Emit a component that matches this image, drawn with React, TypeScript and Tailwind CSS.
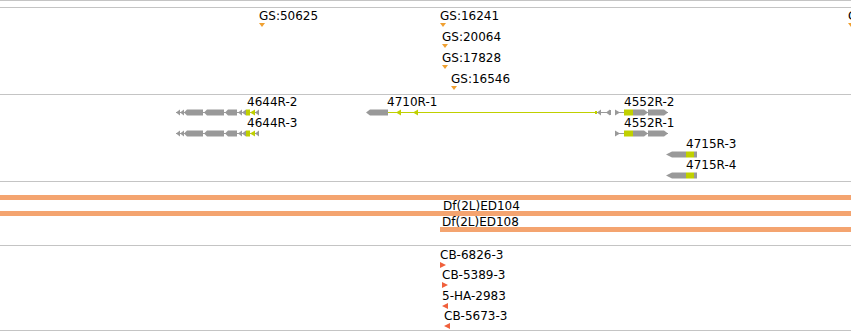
import React from "react";

const GRAY = "#999999";
const GREEN = "#c0d000";
const ORANGE = "#f0a030";
const RED = "#f0603c";

// shape helpers (page x coords, track-local y)
const leftExon = (x0: number, x1: number, cy: number, tip = 3, h = 3) =>
  `${x0},${cy} ${x0 + tip},${cy - h} ${x1},${cy - h} ${x1},${cy + h} ${x0 + tip},${cy + h}`;
const rightExon = (x0: number, x1: number, cy: number, tip = 3, h = 3) =>
  `${x0},${cy - h} ${x1 - tip},${cy - h} ${x1},${cy} ${x1 - tip},${cy + h} ${x0},${cy + h}`;
const leftHead = (x: number, cy: number, w = 4, h = 3) =>
  `${x},${cy} ${x + w},${cy - h} ${x + w},${cy + h}`;
const rightHead = (x: number, cy: number, w = 4, h = 3) =>
  `${x},${cy - h} ${x + w},${cy} ${x},${cy + h}`;

const TEXT =
  "block whitespace-nowrap font-['DejaVu_Sans',sans-serif] text-[12px] leading-[14px] text-black";

// A point feature on the canvas: label over a small marker
function PointFeature({
  pos,
  t,
  kind,
}: {
  pos: string;
  t: string;
  kind: "down" | "right" | "left";
}) {
  return (
    <div className={`absolute flex flex-col items-start ${pos}`}>
      <span className={TEXT}>{t}</span>
      {kind === "down" && (
        <svg width={6} height={4} className="block">
          <polygon points="0,0 6,0 3,4" fill={ORANGE} />
        </svg>
      )}
      {kind === "right" && (
        <svg width={6} height={6} className="block">
          <polygon points="0,0 6,3 0,6" fill={RED} />
        </svg>
      )}
      {kind === "left" && (
        <svg width={6} height={6} className="block">
          <polygon points="0,3 6,0 6,6" fill={RED} />
        </svg>
      )}
    </div>
  );
}

function Label({ pos, t }: { pos: string; t: string }) {
  return <span className={`absolute ${TEXT} ${pos}`}>{t}</span>;
}

function Gene4644({ cy }: { cy: number }) {
  const c = cy + 0.5;
  return (
    <g>
      <rect x={176} y={cy} width={83} height={1} fill={GRAY} />
      <polygon points={leftHead(176, c)} fill={GRAY} />
      <polygon points={leftHead(180, c)} fill={GRAY} />
      <polygon points={leftExon(184, 203, c)} fill={GRAY} />
      <polygon points={leftExon(204, 224, c)} fill={GRAY} />
      <polygon points={leftExon(225, 237, c)} fill={GRAY} />
      <polygon points={leftHead(238, c)} fill={GRAY} />
      <polygon points={leftHead(242, c)} fill={GRAY} />
      <rect x={246} y={cy - 2.5} width={4} height={6} fill={GREEN} />
      <polygon points={leftHead(250, c, 5)} fill={GREEN} />
      <polygon points={leftHead(255, c)} fill={GRAY} />
    </g>
  );
}

function Gene4552({ cy }: { cy: number }) {
  const c = cy + 0.5;
  return (
    <g>
      <rect x={615} y={cy} width={53} height={1} fill={GRAY} />
      <polygon points={rightHead(615, c, 5)} fill={GRAY} />
      <rect x={624} y={cy - 2.5} width={9} height={6} fill={GREEN} />
      <polygon points={rightExon(633, 648, c, 4)} fill={GRAY} />
      <polygon points={rightExon(648, 668, c, 4)} fill={GRAY} />
    </g>
  );
}

function Gene4715({ cy }: { cy: number }) {
  const c = cy + 0.5;
  return (
    <g>
      <polygon points={leftExon(666, 686, c, 6)} fill={GRAY} />
      <rect x={686} y={cy - 2.5} width={8} height={6} fill={GREEN} />
      <rect x={694} y={cy - 2.5} width={3} height={6} fill={GRAY} />
    </g>
  );
}

const TRACK = "relative w-full shrink-0 overflow-hidden border-t border-[#c4c4c4]";

export default function App() {
  return (
    <div className="flex h-[333px] w-[851px] flex-col overflow-hidden bg-white">
      <div className={`${TRACK} h-[7px]`} />

      {/* GS track */}
      <div className={`${TRACK} h-[87px]`}>
        <PointFeature pos="left-[259px] top-[1px]" t="GS:50625" kind="down" />
        <PointFeature pos="left-[440px] top-[1px]" t="GS:16241" kind="down" />
        <PointFeature pos="left-[442px] top-[22px]" t="GS:20064" kind="down" />
        <PointFeature pos="left-[442px] top-[43px]" t="GS:17828" kind="down" />
        <PointFeature pos="left-[451px] top-[64px]" t="GS:16546" kind="down" />
        <PointFeature pos="left-[848px] top-[1px]" t="GS:10000" kind="down" />
      </div>

      {/* Gene track */}
      <div className={`${TRACK} h-[87px]`}>
        <svg className="absolute left-0 top-0" width={851} height={86}>
          <Gene4644 cy={17} />
          <Gene4644 cy={38} />
          {/* 4710R-1 */}
          <polygon points={leftExon(366, 388, 17.5, 4)} fill={GRAY} />
          <rect x={388} y={17} width={208} height={1} fill={GREEN} />
          <polygon points={leftHead(396, 17.5, 5)} fill={GREEN} />
          <polygon points={leftHead(413, 17.5, 5)} fill={GREEN} />
          <rect x={595} y={16} width={2} height={3} fill={GREEN} />
          <rect x={597} y={17} width={14} height={1} fill={GRAY} />
          <polygon points={leftHead(597, 17.5, 4)} fill={GRAY} />
          <polygon points={leftHead(606, 17.5, 4)} fill={GRAY} />
          <rect x={610} y={15} width={1} height={5} fill={GRAY} />
          <Gene4552 cy={17} />
          <Gene4552 cy={38} />
          <Gene4715 cy={59} />
          <Gene4715 cy={80} />
        </svg>
        <Label pos="left-[247px] top-0" t="4644R-2" />
        <Label pos="left-[247px] top-[21px]" t="4644R-3" />
        <Label pos="left-[387px] top-0" t="4710R-1" />
        <Label pos="left-[624px] top-0" t="4552R-2" />
        <Label pos="left-[624px] top-[21px]" t="4552R-1" />
        <Label pos="left-[686px] top-[42px]" t="4715R-3" />
        <Label pos="left-[686px] top-[63px]" t="4715R-4" />
      </div>

      {/* Deletions track */}
      <div className={`${TRACK} h-[64px]`}>
        <div className="absolute left-0 top-[13px] h-[5px] w-full bg-[#f4a470]" />
        <div className="absolute left-0 top-[29px] h-[5px] w-full bg-[#f4a470]" />
        <div className="absolute left-[440px] top-[45px] h-[5px] w-[411px] bg-[#f4a470]" />
        <Label pos="left-[443px] top-[17px]" t="Df(2L)ED104" />
        <Label pos="left-[442px] top-[33px]" t="Df(2L)ED108" />
      </div>

      {/* Bottom track */}
      <div className={`${TRACK} h-[85px]`}>
        <PointFeature pos="left-[440px] top-[2px]" t="CB-6826-3" kind="right" />
        <PointFeature pos="left-[442px] top-[22px]" t="CB-5389-3" kind="right" />
        <PointFeature pos="left-[442px] top-[43px]" t="5-HA-2983" kind="left" />
        <PointFeature pos="left-[444px] top-[63px]" t="CB-5673-3" kind="left" />
      </div>
      <div className="h-[3px] w-full shrink-0 border-t border-[#c4c4c4]" />
    </div>
  );
}
